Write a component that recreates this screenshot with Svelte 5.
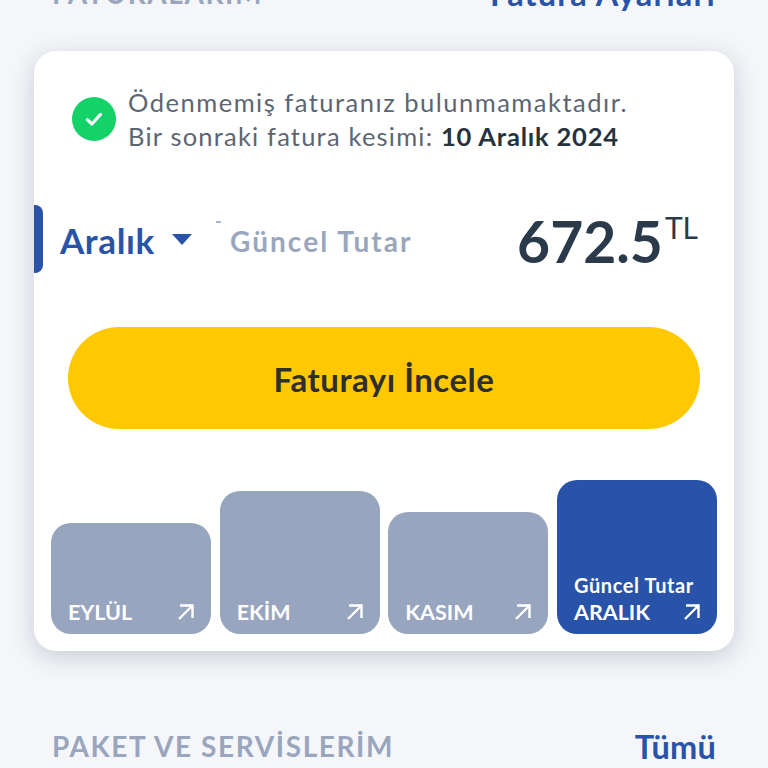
<script>
  const bills = [
    { month: 'EYLÜL', height: 111 },
    { month: 'EKİM', height: 143 },
    { month: 'KASIM', height: 122 },
    { month: 'ARALIK', height: 154, current: true }
  ]
</script>

<div class="page">
  <header class="section-head top">
    <span class="section-title">FATURALARIM</span>
    <span class="section-link wide">Fatura Ayarları</span>
  </header>

  <section class="card">
    <div class="status">
      <span class="check">
        <svg viewBox="0 0 24 24" width="24" height="24" fill="none" stroke="#fff" stroke-width="3.2" stroke-linecap="round" stroke-linejoin="round">
          <path d="M5.5 12.8l4.4 4.2 8.6-9.6" />
        </svg>
      </span>
      <p>
        <span class="line-one">Ödenmemiş faturanız bulunmamaktadır.</span><br />
        Bir sonraki fatura kesimi: <strong>10 Aralık 2024</strong>
      </p>
    </div>

    <div class="summary">
      <span class="tab"></span>
      <div class="month">
        <span>Aralık</span>
        <svg viewBox="0 0 20 12" width="20" height="12"><path d="M0 0h20L10 11z" fill="#2953a8" /></svg>
        <i class="speck"></i>
      </div>
      <span class="label">Güncel Tutar</span>
      <div class="amount">672.5<sup>TL</sup></div>
    </div>

    <button class="cta">Faturayı İncele</button>

    <div class="bars">
      {#each bills as bill}
        <div class="bar" class:current={bill.current} style="height: {bill.height}px">
          {#if bill.current}<span class="bar-note">Güncel Tutar</span>{/if}
          <div class="bar-foot">
            <span>{bill.month}</span>
            <svg viewBox="0 0 18 18" width="18" height="18" fill="none" stroke="#fff" stroke-width="2.4">
              <path d="M3 2.5h12.5V15M15 3L2 16" />
            </svg>
          </div>
        </div>
      {/each}
    </div>
  </section>

  <footer class="section-head bottom">
    <span class="section-title">PAKET VE SERVİSLERİM</span>
    <span class="section-link">Tümü</span>
  </footer>
</div>

<style>
  :global(body) {
    background: #f4f6f9;
  }

  .page {
    height: 768px;
    overflow: hidden;
    font-family: Lato, "Noto Sans", sans-serif;
    background: #f4f6f9;
  }

  .section-head {
    display: flex;
    justify-content: space-between;
    align-items: center;
    padding: 0 52px;
    height: 40px;
  }

  .section-head.top {
    margin-top: -27px;
    margin-bottom: 38px;
  }

  .section-head.bottom {
    margin-top: 75px;
  }

  .section-title {
    font-size: 28px;
    font-weight: 700;
    letter-spacing: 1.6px;
    color: #9aa6be;
  }

  .section-link {
    font-size: 32.5px;
    font-weight: 700;
    letter-spacing: 0.2px;
    color: #2953a8;
  }

  .section-link.wide {
    letter-spacing: 1.1px;
  }

  .card {
    box-sizing: border-box;
    width: 700px;
    height: 600px;
    margin-left: 34px;
    padding-top: 34px;
    background: #fff;
    border-radius: 22px;
    box-shadow: 0 6px 24px rgba(60, 70, 90, 0.24);
  }

  .status {
    display: flex;
    align-items: center;
    gap: 12px;
    padding-left: 38px;
  }

  .check {
    display: flex;
    align-items: center;
    justify-content: center;
    width: 44px;
    height: 44px;
    margin-top: -1px;
    border-radius: 50%;
    background: #14d168;
  }

  .status p {
    margin: 0;
    font-size: 25.5px;
    line-height: 34px;
    letter-spacing: 1.2px;
    color: #5c6672;
  }

  .line-one {
    letter-spacing: 1.5px;
  }

  .status strong {
    font-weight: 700;
    letter-spacing: 0.8px;
    color: #26323e;
  }

  .summary {
    position: relative;
    display: flex;
    align-items: center;
    height: 68px;
    margin-top: 52px;
    padding-right: 36px;
  }

  .tab {
    flex: none;
    width: 9px;
    height: 68px;
    border-radius: 0 8px 8px 0;
    background: #2953a8;
  }

  .month {
    position: relative;
    display: flex;
    align-items: center;
    gap: 17px;
    width: 188px;
    padding: 2px 0 0 17px;
    box-sizing: border-box;
    font-size: 35px;
    font-weight: 700;
    letter-spacing: 0.6px;
    color: #2953a8;
  }

  .speck {
    position: absolute;
    left: 173px;
    top: 4px;
    width: 5px;
    height: 1.5px;
    background: #a9b3c6;
  }

  .label {
    padding-top: 4px;
    margin-left: -1px;
    font-size: 28px;
    font-weight: 700;
    letter-spacing: 2.05px;
    color: #9aa6be;
  }

  .amount {
    margin-left: auto;
    padding-top: 4px;
    font-size: 57px;
    font-weight: 700;
    color: #2b3a4a;
  }

  .amount sup {
    margin-left: 2px;
    font-size: 30px;
    font-weight: 400;
    vertical-align: 24px;
    line-height: 0;
  }

  .cta {
    display: block;
    width: 632px;
    height: 102px;
    margin: 54px 0 0 34px;
    padding: 2px 0 0;
    border: 0;
    border-radius: 51px;
    background: #ffc800;
    font-family: inherit;
    font-size: 33px;
    font-weight: 700;
    letter-spacing: 0.5px;
    color: #2e2e2e;
  }

  .bars {
    display: grid;
    grid-template-columns: repeat(4, 160px);
    gap: 8.67px;
    align-items: end;
    height: 154px;
    margin: 51px 0 0 17px;
  }

  .bar {
    box-sizing: border-box;
    display: flex;
    flex-direction: column;
    justify-content: flex-end;
    padding: 0 16px 8px 17px;
    border-radius: 20px;
    background: #98a5bf;
    color: #fff;
  }

  .bar.current {
    background: #2953a8;
  }

  .bar-note {
    font-size: 20px;
    font-weight: 700;
    line-height: 26px;
    letter-spacing: 0.6px;
  }

  .bar-foot {
    display: flex;
    justify-content: space-between;
    align-items: center;
    font-size: 21.5px;
    font-weight: 700;
    line-height: 28px;
  }
</style>
